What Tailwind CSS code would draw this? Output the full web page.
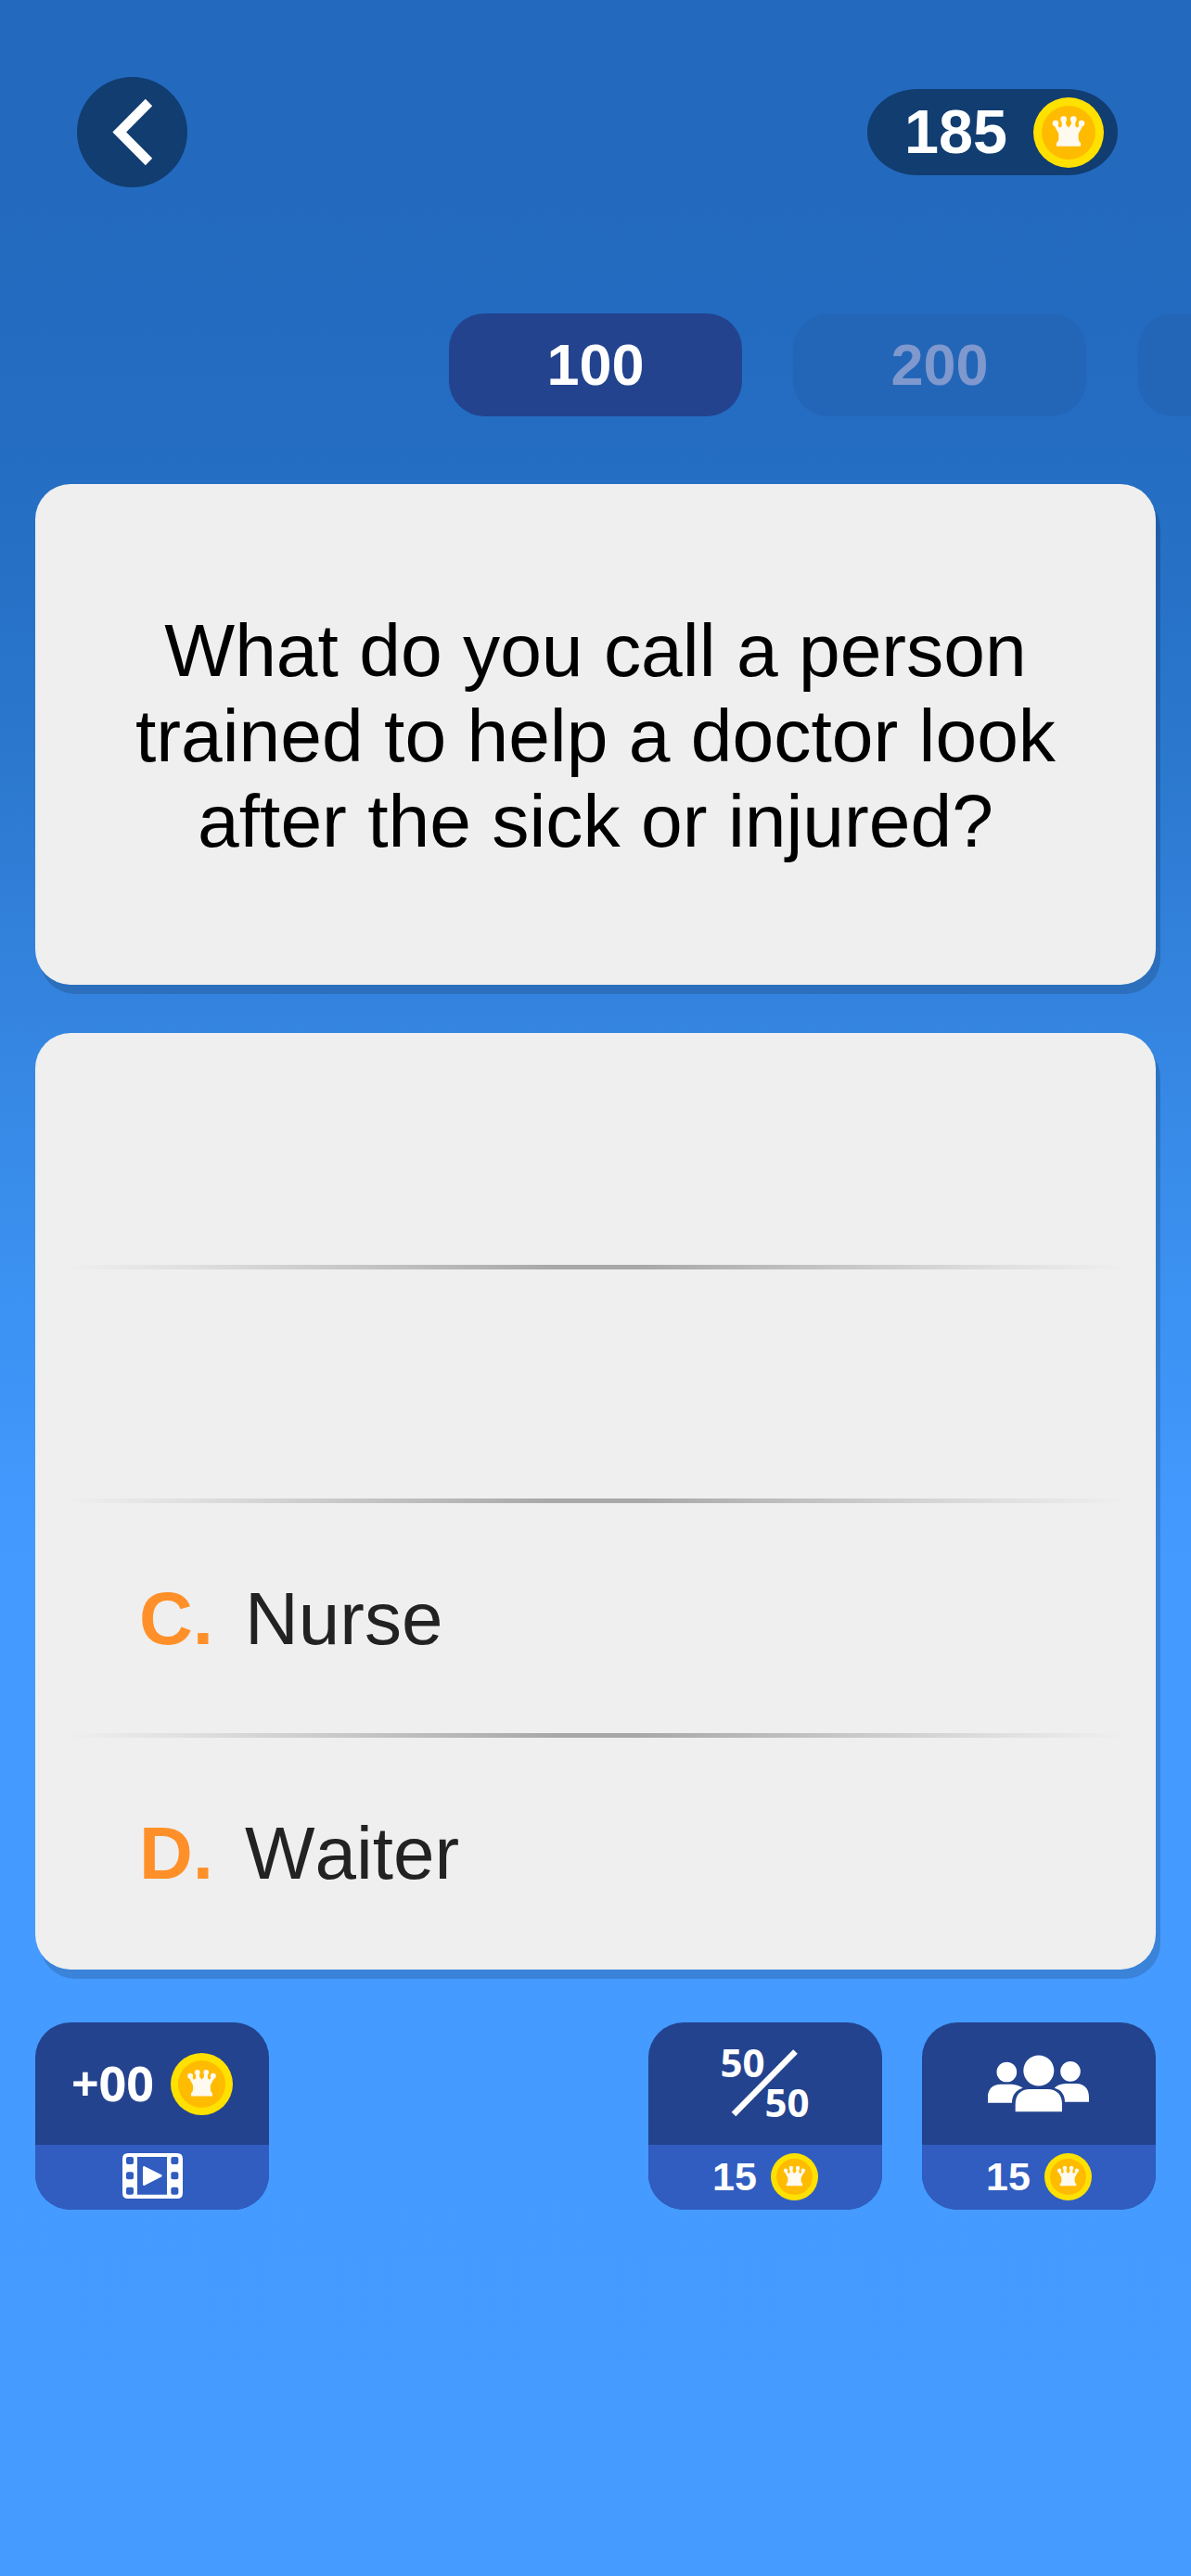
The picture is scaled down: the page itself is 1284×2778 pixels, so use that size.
<!DOCTYPE html>
<html lang="en">

<head>
    <meta charset="UTF-8">
    <meta name="viewport" content="width=device-width, initial-scale=1.0">
    <title>Quiz</title>
    <script src="https://cdn.jsdelivr.net/npm/@tailwindcss/browser@4"></script>
</head>

<body class="w-[1284px] h-[2778px] overflow-hidden font-['Liberation_Sans',Arial,sans-serif] [font-kerning:none] bg-[linear-gradient(to_bottom,#2369be_0px,#236bc0_350px,#256fc4_560px,#2c79d0_850px,#3484df_1080px,#3c92f2_1400px,#449aff_1680px,#459bff_2778px)]">

    <!-- Shared coin icon -->
    <svg class="hidden">
        <symbol id="coin" viewBox="0 0 228 228">
            <circle cx="114" cy="114" r="114" fill="#ffe100" />
            <circle cx="114" cy="114" r="87" fill="#ffbb00" />
            <g fill="#fffaf0">
                <circle cx="72" cy="84" r="10" />
                <circle cx="98" cy="71" r="10" />
                <circle cx="130" cy="71" r="10" />
                <circle cx="156" cy="84" r="10" />
                <path d="M66 88 L82 118 V136 Q80 144 75 147 V158 H153 V147 Q148 144 146 136 V118 L162 88 L152 86 L143 98 L136 94 V74 L124 74 L122 88 L114 98 L106 88 L104 74 L92 74 V94 L85 98 L76 86Z" />
            </g>
        </symbol>
    </svg>

    <!-- Top bar -->
    <header class="flex justify-between items-center pt-[83px] pl-[83px] pr-[79px]">
        <button class="w-[119px] h-[119px] rounded-full bg-[#113d70]">
            <svg viewBox="0 0 119 119" fill="none" stroke="#fff" stroke-width="10.4">
                <path d="M77.5 27.5 L45.7 59.5 L77.5 91.5" />
            </svg>
        </button>
        <div class="flex items-center justify-end w-[270px] h-[93px] pr-[15px] gap-[28px] rounded-[54px/46px] bg-[#113d70] text-white">
            <span class="text-[66.5px] leading-none font-bold">185</span>
            <svg class="w-[76px] h-[76px]"><use href="#coin" /></svg>
        </div>
    </header>

    <!-- Prize levels -->
    <nav class="flex gap-[55px] mt-[136px] pl-[484px] overflow-hidden text-[63px] font-bold text-white">
        <div class="shrink-0 flex items-center justify-center w-[316px] h-[111px] rounded-[38px] bg-[#23438f]">100</div>
        <div class="shrink-0 flex items-center justify-center w-[316px] h-[111px] rounded-[38px] bg-[#2366b8] text-[#7f98cd]">200</div>
        <div class="flex-1 h-[111px] ml-px rounded-l-[38px] bg-[#2366b8]"></div>
    </nav>

    <!-- Question -->
    <section class="flex items-center justify-center mt-[73px] mx-[38px] h-[540px] rounded-[38px] bg-[#efefef] shadow-[5px_10px_0_rgba(0,0,0,0.15)]">
        <h1 class="pt-[2px] text-[80.4px] leading-[92px] text-center text-black whitespace-nowrap">
            What do you call a person<br>trained to help a doctor look<br>after the sick or injured?
        </h1>
    </section>

    <!-- Answers -->
    <section class="grid grid-rows-[255px_252px_253px_250px] mt-[52px] mx-[38px] h-[1010px] rounded-[38px] bg-[#efefef] shadow-[5px_10px_0_rgba(0,0,0,0.15)] text-[80px] text-[#222222]">
        <div class="flex flex-col justify-end">
            <div class="h-[5px] mx-[22px] bg-[linear-gradient(to_right,#efefef_1%,#e0e0e0_12%,#a8a8a8_46%,#a8a8a8_54%,#e0e0e0_88%,#efefef_99%)]"></div>
        </div>
        <div class="flex flex-col justify-end">
            <div class="h-[5px] mx-[22px] bg-[linear-gradient(to_right,#efefef_1%,#e0e0e0_12%,#a8a8a8_46%,#a8a8a8_54%,#e0e0e0_88%,#efefef_99%)]"></div>
        </div>
        <div class="flex flex-col">
            <div class="flex-1 flex items-center pt-px pl-[112px]">
                <span class="w-[114px] font-bold text-[#ff9029]">C.</span>
                <span>Nurse</span>
            </div>
            <div class="h-[5px] mx-[22px] bg-[linear-gradient(to_right,#efefef_1%,#e0e0e0_12%,#a8a8a8_46%,#a8a8a8_54%,#e0e0e0_88%,#efefef_99%)]"></div>
        </div>
        <div class="flex items-center pl-[112px]">
            <span class="w-[114px] font-bold text-[#ff9029]">D.</span>
            <span>Waiter</span>
        </div>
    </section>

    <!-- Lifelines -->
    <footer class="flex gap-[43px] mt-[57px] mx-[38px] text-white font-bold">
        <button class="w-[252px] h-[202px] mr-auto rounded-[38px] overflow-hidden bg-[#23438f]">
            <div class="flex items-center justify-center h-[132px] gap-[18px]">
                <span class="pb-[2px] font-['Open_Sans',sans-serif] text-[52px] leading-none">+00</span>
                <svg class="w-[67px] h-[67px]"><use href="#coin" /></svg>
            </div>
            <div class="flex items-center justify-center h-[70px] bg-[#315dc0]">
                <svg class="w-[65px] h-[49px] mb-[3px]" viewBox="0 0 195 147">
                    <path fill="#fff" fill-rule="evenodd" d="M18 0 H177 Q195 0 195 18 V129 Q195 147 177 147 H18 Q0 147 0 129 V18 Q0 0 18 0Z M48 12 V134 H144 V12Z" />
                    <g fill="#315dc0">
                        <rect x="12" y="12" width="24" height="24" rx="6" />
                        <rect x="12" y="61" width="24" height="24" rx="6" />
                        <rect x="12" y="110" width="24" height="24" rx="6" />
                        <rect x="157" y="12" width="24" height="24" rx="6" />
                        <rect x="157" y="61" width="24" height="24" rx="6" />
                        <rect x="157" y="110" width="24" height="24" rx="6" />
                    </g>
                    <path d="M70 46 L124 73 L70 101Z" fill="#fff" stroke="#fff" stroke-width="8" stroke-linejoin="round" />
                </svg>
            </div>
        </button>
        <button class="w-[252px] h-[202px] rounded-[38px] overflow-hidden bg-[#23438f]">
            <svg class="w-[252px] h-[132px]" viewBox="0 0 252 132" fill="#fff">
                <text x="77.5" y="58.5" font-family="Open Sans" font-size="42" font-weight="700">50</text>
                <text x="125.5" y="101.5" font-family="Open Sans" font-size="42" font-weight="700">50</text>
                <path d="M92 99 L158.5 31.5" stroke="#fff" stroke-width="6.5" />
            </svg>
            <div class="flex items-center h-[70px] pl-[69px] pb-[2px] bg-[#315dc0]">
                <span class="w-[63px] text-left text-[43px] leading-none">15</span>
                <svg class="w-[51px] h-[51px]"><use href="#coin" /></svg>
            </div>
        </button>
        <button class="w-[252px] h-[202px] rounded-[38px] overflow-hidden bg-[#23438f]">
            <svg class="w-[252px] h-[132px]" viewBox="60 63 756 396" fill="#fff">
                <circle cx="334" cy="223.5" r="32.5" />
                <circle cx="540" cy="221.5" r="32.5" />
                <circle cx="437.5" cy="219" r="49.5" />
                <path d="M273 323 V304 C273 278 290 263 314 263 H350 Q372 264 386 275 C364 281 351 298 351 323Z" />
                <path d="M600 320 V304 C600 277 583 261 560 261 H524 Q502 262 488 275 C511 281 522 297 522 320Z" />
                <path d="M362 352 V327 C362 297 380 279 409 279 H466 C495 279 513 297 513 327 V352Z" />
            </svg>
            <div class="flex items-center h-[70px] pl-[69px] pb-[2px] bg-[#315dc0]">
                <span class="w-[63px] text-left text-[43px] leading-none">15</span>
                <svg class="w-[51px] h-[51px]"><use href="#coin" /></svg>
            </div>
        </button>
    </footer>

</body>

</html>
